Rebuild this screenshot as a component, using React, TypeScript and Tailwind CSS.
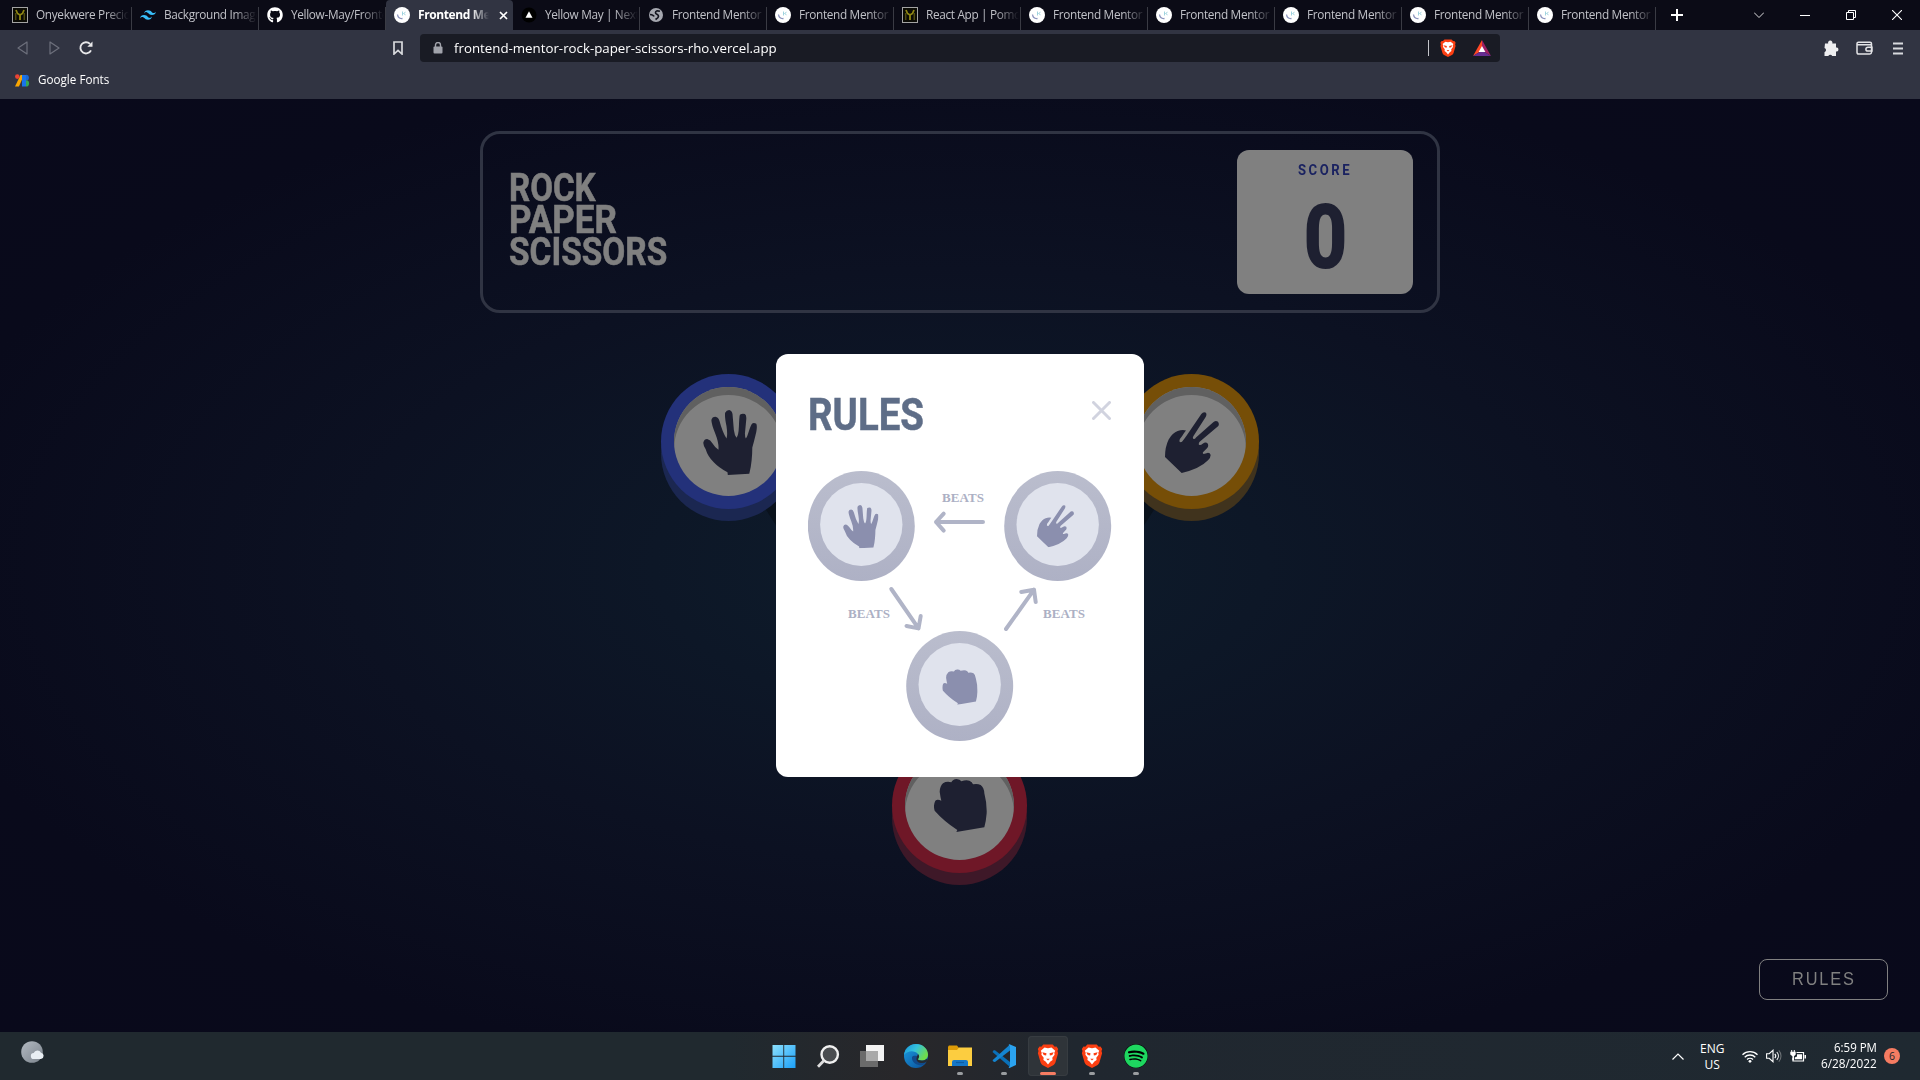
import { useLayoutEffect, useRef, useState } from "react";
import type { ReactNode } from "react";
import { FaGithub, FaSpotify } from "react-icons/fa";
import { SiTailwindcss } from "react-icons/si";

/* Squeezes a line of text horizontally to a fixed width. */
function Fit({ width, className = "", children }: { width: number; className?: string; children: ReactNode }) {
  const ref = useRef<HTMLSpanElement>(null);
  const [scale, setScale] = useState(1);
  useLayoutEffect(() => {
    if (ref.current) setScale(width / ref.current.offsetWidth);
  }, [width]);
  return (
    <span className={`block whitespace-nowrap ${className}`} style={{ width }}>
      <span ref={ref} className="inline-block origin-left" style={{ transform: `scaleX(${scale})` }}>
        {children}
      </span>
    </span>
  );
}

/* ---------- favicons ---------- */

const YIcon = () => (
  <svg width="16" height="16" viewBox="0 0 16 16">
    <rect x="0.5" y="0.5" width="15" height="15" fill="#0b0b05" stroke="#a3a3a3" />
    <path d="M4 3 5.500 6.500 8 8l2.500-1.500L12 3M8 8v5" fill="none" stroke="#8f8712" strokeWidth="1.800" />
    <path d="M3.700 6v7M12.300 6v7" stroke="#4d4a10" strokeWidth="1.500" />
  </svg>
);
const MentorIcon = () => (
  <svg width="16" height="16" viewBox="0 0 16 16">
    <circle cx="8" cy="8" r="8" fill="#fff" />
    <path d="M3.500 7.500c.4 2.800 2.600 4.300 5 4" fill="none" stroke="#8b93bd" strokeWidth="1.300" />
    <path d="M8.500 4.500v4M11.500 5.200 9.500 6.500l2 1.300" fill="none" stroke="#9fd3de" strokeWidth="1" />
  </svg>
);
const VercelIcon = () => (
  <svg width="16" height="16" viewBox="0 0 16 16">
    <circle cx="8" cy="8" r="7.500" fill="#000" />
    <path d="M8 4.300 11.500 10.700h-7z" fill="#fff" />
  </svg>
);
const GlobeIcon = () => (
  <svg width="16" height="16" viewBox="0 0 16 16">
    <circle cx="8" cy="8" r="7" fill="#a6a8b0" />
    <path d="M12 4.300C9 3.300 7.500 4 7.500 5.700c0 1.800 3 1.500 3 3.600 0 1.700-1.500 2.400-3 3.200M2 7.500c2 .2 3.700.5 4 2" fill="none" stroke="#13141e" strokeWidth="1.700" />
  </svg>
);

const tabs: { icon: ReactNode; title: string; active?: boolean }[] = [
  { icon: <YIcon />, title: "Onyekwere Precious" },
  { icon: <SiTailwindcss size={16} color="#38bdf8" />, title: "Background Image" },
  { icon: <FaGithub size={16} color="#fff" />, title: "Yellow-May/Frontend" },
  { icon: <MentorIcon />, title: "Frontend Mentor", active: true },
  { icon: <VercelIcon />, title: "Yellow May | Next.js" },
  { icon: <GlobeIcon />, title: "Frontend Mentor |" },
  { icon: <MentorIcon />, title: "Frontend Mentor |" },
  { icon: <YIcon />, title: "React App | Pomodoro" },
  { icon: <MentorIcon />, title: "Frontend Mentor |" },
  { icon: <MentorIcon />, title: "Frontend Mentor |" },
  { icon: <MentorIcon />, title: "Frontend Mentor |" },
  { icon: <MentorIcon />, title: "Frontend Mentor |" },
  { icon: <MentorIcon />, title: "Frontend Mentor |" },
];

function Tab({ icon, title, active }: { icon: ReactNode; title: string; active?: boolean }) {
  return (
    <div className={`flex h-[30px] w-[127px] shrink-0 items-center pl-2 first:w-[128px] ${active ? "rounded-t-[4px] bg-[#313442]" : ""}`}>
      <span className="w-4 shrink-0">{icon}</span>
      <span
        className={`ml-2 overflow-hidden whitespace-nowrap [mask-image:linear-gradient(to_right,#000_75%,transparent)] ${
          active ? "w-[71px] text-[12px] font-bold tracking-[-0.400px] text-white" : "w-[93px] text-[11.800px] tracking-[-0.330px] text-[#c0c1c7]"
        }`}
      >
        {title}
      </span>
      {active ? (
        <svg className="ml-[10px]" width="9" height="9" viewBox="0 0 9 9">
          <path d="m1 1 7 7M8 1 1 8" stroke="#fff" strokeWidth="1.700" />
        </svg>
      ) : (
        <span className="mt-[7px] ml-auto h-[23px] w-px bg-[#3a3b44]" />
      )}
    </div>
  );
}

const BraveIcon = ({ size }: { size: number }) => (
  <svg width={size} height={size} viewBox="0 0 24 24">
    <path d="M7.300.5h9.400l2 2.200 1.800-.2 1.700 2.600-.7 2 .6 2.200-2.700 9.200c-.4 1.300-1.200 2-2.200 2.700L12 24l-5.200-2.800c-1-.7-1.800-1.400-2.200-2.700L1.900 9.300l.6-2.200-.7-2 1.700-2.600 1.800.2z" fill="#fb3f12" />
    <path d="M8.500 3.500 12 4.200l3.500-.7 3.700 3.300-.9 2 .3 2-2.300 3 .3 2.200-2.200 1.500L12 20.500 9.600 17.500l-2.200-1.500.3-2.200-2.300-3 .3-2-.9-2z" fill="#fff" />
    <path d="m6.300 8.300 4.200.9-.4 2.300-2.400-.6zM17.700 8.300l-4.200.9.4 2.300 2.400-.6zM10.200 14.800h3.600L12 16.500z" fill="#fb3f12" />
  </svg>
);

function BrowserChrome() {
  return (
    <header className="h-[99px] bg-[#313442] font-['Open_Sans','Noto_Sans',sans-serif]">
      <div className="flex h-[30px] items-center bg-[#0b0b16] pl-1">
        {tabs.map((t, i) => (
          <Tab key={i} {...t} />
        ))}
        <svg className="ml-[15px]" width="12" height="12" viewBox="0 0 12 12">
          <path d="M6 0v12M0 6h12" stroke="#fff" strokeWidth="2" />
        </svg>
        <div className="ml-auto flex items-center gap-[36px] pr-[18px]">
          <svg width="10" height="6" viewBox="0 0 10 6"><path d="m0 .5 5 5 5-5" fill="none" stroke="#ddd" /></svg>
          <svg width="10" height="10" viewBox="0 0 10 10"><path d="M0 5.500h10" stroke="#fff" /></svg>
          <svg width="10" height="10" viewBox="0 0 10 10"><path d="M.5 2.500h7v7h-7zM2.500 2.500v-2h7v7h-2" fill="none" stroke="#fff" /></svg>
          <svg width="10" height="10" viewBox="0 0 10 10"><path d="m0 0 10 10M10 0 0 10" stroke="#fff" strokeWidth="1.100" /></svg>
        </div>
      </div>
      <div className="flex h-9 items-center pl-[17px]">
        <svg width="11" height="14" viewBox="0 0 11 14"><path d="M10 1v12L1 7z" fill="none" stroke="#6d707c" strokeWidth="1.200" strokeLinejoin="round" /></svg>
        <svg className="ml-[21px]" width="11" height="14" viewBox="0 0 11 14"><path d="M1 1v12l9-6z" fill="none" stroke="#6d707c" strokeWidth="1.200" strokeLinejoin="round" /></svg>
        <svg className="ml-[19px]" width="14" height="14" viewBox="0 0 14 14">
          <path d="M12 9.300A5.600 5.600 0 1 1 11 2.900" fill="none" stroke="#e8e8ea" strokeWidth="1.900" />
          <path d="M13.500.5v5.300H8.300z" fill="#e8e8ea" />
        </svg>
        <svg className="ml-[300px]" width="10" height="14" viewBox="0 0 10 14"><path d="M1 1h8v12L5 9.300 1 13z" fill="none" stroke="#d9dadd" strokeWidth="1.700" /></svg>
        <div className="ml-[17px] flex h-7 w-[1080px] items-center rounded bg-[#191b24] pl-[13px]">
          <svg width="10" height="12" viewBox="0 0 10 12">
            <rect x="0.500" y="4.500" width="9" height="7" rx="1" fill="#a1a3ab" />
            <path d="M2.500 5V3a2.500 2.500 0 0 1 5 0v2" fill="none" stroke="#a1a3ab" strokeWidth="1.400" />
          </svg>
          <Fit width={323} className="mt-px ml-[11px] text-[13px] text-white">frontend-mentor-rock-paper-scissors-rho.vercel.app</Fit>
          <span className="ml-auto h-4 w-px bg-[#c4c5ca]" />
          <span className="ml-[10px]"><BraveIcon size={18} /></span>
          <svg className="mr-[9px] ml-4" width="18" height="16" viewBox="0 0 18 16">
            <path d="M9 0 0 16l9-5.500z" fill="#ff4724" />
            <path d="M9 0l9 16-9-5.500z" fill="#9e1f63" />
            <path d="M0 16h18l-9-5.500z" fill="#662d91" />
            <path d="m9 6 3.400 6H5.600z" fill="#fff" />
          </svg>
        </div>
        <div className="ml-auto flex items-center gap-[17px] pr-[17px]">
          <svg width="16" height="16" viewBox="0 0 16 16">
            <path fill="#eeeef0" d="M2 3.500h3.200a2.200 2.200 0 1 1 4.100 0H13v4a2 2 0 1 1 0 3.900V16H9.200a2.100 2.100 0 0 0-3.900 0H1.500v-3.800a2.200 2.200 0 0 0 0-4.200z" />
          </svg>
          <svg width="17" height="14" viewBox="0 0 17 14">
            <path d="M15.500 4V2.800c0-1-.7-1.600-1.500-1.600H2.500C1.500 1.200 1 1.800 1 2.600v8.600c0 1.100.7 1.800 1.700 1.800h11.100c1 0 1.700-.7 1.700-1.700V4M1.500 3.800H15.500M16 6.300h-4.200a1.900 1.900 0 0 0 0 3.800H16z" fill="none" stroke="#e3e3e6" strokeWidth="1.500" />
          </svg>
          <svg className="ml-[3px]" width="10" height="13" viewBox="0 0 10 13"><path d="M0 1.500h10M0 6.500h10M0 11.500h10" stroke="#d8d9dd" strokeWidth="1.800" /></svg>
        </div>
      </div>
      <div className="flex h-7 items-center pl-[15px]">
        <svg width="15" height="13" viewBox="0 0 15 13">
          <path d="M5.500 1H9L4 12.500H0z" fill="#f9a602" />
          <circle cx="2.300" cy="2.600" r="2.300" fill="#ea4335" />
          <path d="M7 1h4v11.500H7z" fill="#1a73e8" />
          <path d="M11 .8a2.900 2.900 0 0 1 0 5.800z" fill="#1967d2" />
          <path d="M11 6.300a3.100 3.100 0 0 1 0 6.200z" fill="#34a853" />
        </svg>
        <Fit width={71} className="ml-2 text-[12px] text-white">Google Fonts</Fit>
      </div>
    </header>
  );
}

/* ---------- hands ---------- */

const hands = {
  paper: {
    box: "158 180 161 194",
    d: "M232 374 231 366Q205 352 190 336 172 318 166 297 158 285 159 277 162 266 172 267 180 269 186 279 195 293 204 299 206 280 195 252 183 222 183 210 185 200 195 200 204 201 207 212 216 246 228 265 232 255 228 228 222 200 224 188 228 180 236 180 244 181 246 192L250 240Q252 256 258 263 264 255 265 230 266 200 268 194 275 189 283 192 288 196 287 208L283 250Q283 262 286 265 290 260 294 246 300 226 304 221 309 217 317 221 320 228 317 245 310 275 305 292 305 310 303 330 301 352 296 370Z",
  },
  scissors: {
    box: "795 186 162 182",
    d: "M795 320Q795 290 806 268 818 248 833 243 846 238 858 241 852 248 846 258 838 266 838 273 841 278 846 275 853 266 860 256L904 192Q910 184 918 188 921 194 917 201L880 258Q877 264 880 266 884 268 888 262L938 218Q945 210 953 214 959 220 955 228L899 275Q895 280 897 284 902 286 908 281 917 274 923 280 927 287 921 294L909 306Q907 310 911 311 917 310 922 308 930 307 932 314 932 322 924 330 900 355 845 368Z",
  },
  rock: {
    box: "462 627 159 159",
    d: "M529 786 532 780Q490 752 464 722 459 706 466 692 472 686 484 692 481 680 479 665 480 648 489 640 500 633 514 637 518 628 530 627 540 628 544 634 558 629 568 632 577 636 579 643 592 640 602 645 612 652 613 670 621 700 620 730 618 755 613 772Z",
  },
};
type HandName = keyof typeof hands;

function Hand({ name, ...rest }: { name: HandName; x?: number; y?: number; width: number; height: number; fill: string; className?: string }) {
  return (
    <svg viewBox={hands[name].box} preserveAspectRatio="none" {...rest}>
      <path d={hands[name].d} />
    </svg>
  );
}

function Pick({ name, ring, className = "" }: { name: HandName; ring: string; className?: string }) {
  const size = { paper: [54, 65], scissors: [54, 61], rock: [53, 53] }[name];
  const shift = { paper: "mt-[1px] ml-[3px]", scissors: "mt-[1px] ml-[2px]", rock: "mt-[-1px] ml-[1px]" }[name];
  return (
    <button className={`flex size-[135px] items-center justify-center rounded-full ${ring} ${className}`}>
      <span className="flex size-[109px] items-center justify-center rounded-full bg-[#808080] shadow-[inset_0_8px_0_#606060]">
        <Hand name={name} width={size[0]} height={size[1]} fill="#1e2031" className={shift} />
      </span>
    </button>
  );
}

/* ---------- rules dialog ---------- */

function RuleDisc({ x, y }: { x: number; y: number }) {
  return (
    <g>
      <ellipse cx={x} cy={y} rx="53.500" ry="55" fill="url(#disc)" />
      <ellipse cx={x} cy={y - 1.500} rx="41.200" ry="41.500" fill="#e0e3ed" />
    </g>
  );
}

function RulesDiagram() {
  return (
    <svg className="mt-[34px]" width="304" height="270" viewBox="808 471 304 270">
      <defs>
        <linearGradient id="disc" x1="0" y1="0" x2="0" y2="1">
          <stop offset="0" stopColor="#babdcd" />
          <stop offset="1" stopColor="#aeb1c5" />
        </linearGradient>
      </defs>
      <RuleDisc x={861.300} y={526} />
      <RuleDisc x={1057.700} y={526} />
      <RuleDisc x={959.700} y={686} />
      <Hand name="paper" x={843} y={505} width={35.500} height={43.300} fill="#8b8fae" />
      <Hand name="scissors" x={1037} y={505} width={37} height={42.300} fill="#8b8fae" />
      <Hand name="rock" x={942.300} y={669.300} width={35.400} height={35.400} fill="#8b8fae" />
      <g fill="none" stroke="#b0b4c7" strokeWidth="4" strokeLinecap="round" strokeLinejoin="round">
        <path d="M983 522H936M943.700 513.700 936 522l7.700 8.600" />
        <path d="m891.300 589 27.200 39.400M906.500 626l12 2.400 2.200-12.400" />
        <path d="m1006 629 28-39.300M1021.300 592l12.700-2.300 1.700 12.300" />
      </g>
      <g className="font-['Liberation_Serif',serif] text-[13px] font-bold" fill="#acb0c4">
        <text x="942" y="502" textLength="42">BEATS</text>
        <text x="848" y="618" textLength="42">BEATS</text>
        <text x="1043" y="618" textLength="42">BEATS</text>
      </g>
    </svg>
  );
}

function RulesDialog() {
  return (
    <section className="absolute top-[255px] left-1/2 h-[423px] w-[368px] -translate-x-1/2 rounded-[12px] bg-white pt-[35px] pl-8">
      <div className="flex h-12 items-start">
        <Fit width={116} className="mt-[2px] text-[44px] leading-[48px] font-bold text-[#5e6d87] [-webkit-text-stroke:0.5px_#5e6d87]">RULES</Fit>
        <svg className="mt-[12px] ml-[168px]" width="19" height="19" viewBox="0 0 19 19">
          <path d="m1.500 1.500 16 16M17.500 1.500l-16 16" stroke="#d1d3df" strokeWidth="3" strokeLinecap="round" />
        </svg>
      </div>
      <RulesDiagram />
    </section>
  );
}

function Game() {
  return (
    <main className="relative flex h-[933px] flex-col items-center bg-[radial-gradient(ellipse_at_center,#0e1d2c_0%,#0c1122_45%,#090a1b_78%,#09091b_100%)] pt-8 font-['Roboto',sans-serif]">
      <div className="flex h-[182px] w-[960px] items-center justify-between rounded-[20px] border-3 border-[#303443] pr-6 pl-[26px]">
        <h1 className="mb-[4px] text-[39.500px] leading-8 font-bold text-[#808080] [-webkit-text-stroke:0.600px_#808080]">
          <Fit width={87}>ROCK</Fit>
          <Fit width={108}>PAPER</Fit>
          <Fit width={158}>SCISSORS</Fit>
        </h1>
        <div className="flex h-36 w-44 flex-col items-center rounded-[12px] bg-[#808080] pt-[10px]">
          <Fit width={54} className="text-[15.500px] leading-[20px] font-bold tracking-[3px] text-[#1a2260]">SCORE</Fit>
          <Fit width={43} className="mt-[13px] text-[87px] leading-[88px] font-bold text-[#1e2031] [-webkit-text-stroke:2px_#1e2031]">0</Fit>
        </div>
      </div>
      <svg className="absolute top-[343px] left-[728px]" width="464" height="365" viewBox="0 0 464 365">
        <path d="M8 8h448L232 357z" fill="none" stroke="#0a121c" strokeWidth="14" />
      </svg>
      <div className="relative mt-[61px] mr-px flex w-[598px] justify-between">
        <Pick name="paper" ring="bg-[#23317a] shadow-[0_12px_0_#1b2751]" />
        <Pick name="scissors" ring="bg-[#764e07] shadow-[0_12px_0_#40331d]" />
      </div>
      <Pick name="rock" ring="bg-[#6f1727] shadow-[0_12px_0_#3e1828]" className="relative mt-[229px] mr-px" />
      <button className="absolute right-8 bottom-8 flex h-[41px] w-[129px] items-center justify-center rounded-[8px] border border-[#808080] font-['Liberation_Sans',sans-serif] text-[17.600px] tracking-[2px] text-[#808080]">
        <Fit width={64}>RULES</Fit>
      </button>
      <RulesDialog />
    </main>
  );
}

/* ---------- taskbar ---------- */

function Slot({ children, mark = "none", active }: { children: ReactNode; mark?: "none" | "dot" | "bar"; active?: boolean }) {
  return (
    <div className="flex w-11 justify-center">
      <div className={`flex h-10 w-10 flex-col items-center rounded pt-2 ${active ? "bg-[#2f3439] ring-1 ring-[#373c41] ring-inset" : ""}`}>
        <span className="h-6">{children}</span>
        {mark === "dot" && <span className="mt-1 h-[3px] w-[6px] rounded-full bg-[#9a9da0]" />}
        {mark === "bar" && <span className="mt-1 h-[3px] w-4 rounded-full bg-[#f67c62]" />}
      </div>
    </div>
  );
}

function Taskbar() {
  return (
    <footer className="grid h-12 grid-cols-[1fr_auto_1fr] bg-[linear-gradient(90deg,#20292f_0%,#20292f_38%,#28272a_47%,#20272f_56%,#1f2931_100%)] pt-1 font-['Open_Sans','Noto_Sans',sans-serif] text-white">
      <svg className="mt-[4px] ml-[20px]" width="25" height="24" viewBox="0 0 25 24">
        <defs>
          <linearGradient id="moon" x1="0" y1="0" x2="1" y2="1"><stop stopColor="#b3bac2" /><stop offset="1" stopColor="#7b838c" /></linearGradient>
        </defs>
        <circle cx="12" cy="12" r="10.800" fill="url(#moon)" />
        <path d="M14 19a3 3 0 0 1-.3-6 4 4 0 0 1 7.300-.3 3.200 3.200 0 0 1 0 6.300z" fill="#e8eef3" />
      </svg>
      <div className="flex">
        <Slot>
          <svg width="24" height="24" viewBox="0 0 24 24">
            <defs><linearGradient id="win" x1="0" y1="0" x2="1" y2="1"><stop stopColor="#8ce0fd" /><stop offset="1" stopColor="#1ba0f8" /></linearGradient></defs>
            <path d="M.5 1h10.800v10.800H.5zM12.200 1h11.300v10.800H12.200zM.5 12.700h10.800V24H.5zM12.200 12.700h11.300V24H12.200z" fill="url(#win)" />
          </svg>
        </Slot>
        <Slot>
          <svg width="24" height="24" viewBox="0 0 24 24">
            <circle cx="13.700" cy="10.500" r="8.200" fill="#4a4d50" stroke="#f0f0f0" strokeWidth="2.400" />
            <path d="m8 16.500-6 6.300" stroke="#dedede" strokeWidth="2.800" />
          </svg>
        </Slot>
        <Slot>
          <svg width="24" height="24" viewBox="0 0 24 24">
            <path d="M6 1h18v16H6z" fill="#f3f3f3" />
            <path d="M0 7h18v16H0z" fill="#6b6b6b" />
            <path d="M6 7h12v10H6z" fill="#a9a9a9" />
          </svg>
        </Slot>
        <Slot>
          <svg width="24" height="24" viewBox="0 0 24 24">
            <defs>
              <linearGradient id="edgeTop" x1="0" y1="0" x2="1" y2="0.500"><stop stopColor="#1693dc" /><stop offset="0.500" stopColor="#35c1dc" /><stop offset="1" stopColor="#6fdd4a" /></linearGradient>
              <linearGradient id="edgeLow" x1="0" y1="0" x2="1" y2="1"><stop stopColor="#1b9de2" /><stop offset="1" stopColor="#0a4d96" /></linearGradient>
            </defs>
            <circle cx="12" cy="12" r="12" fill="url(#edgeLow)" />
            <path d="M0 11C1 4 6 0 12 0c7 0 12 5 12 10.500 0 4-3 6-6.500 6-3 0-4.200-1-3.500-2 1.200-1.300 1.200-3 0-4.500C11 6.500 4 6 0 11z" fill="url(#edgeTop)" />
            <path d="M8 13c-.5 5 4 9 11 8l4-4c-4 2.500-9 1.500-9-1.500.6-1.200.7-3-1-3.500-2-.6-4-.5-5 1z" fill="#114a8b" />
            <path d="M14 10c1.500 1.500 1.500 3 .2 4.500-.8 1 .5 2 3.300 2 2 0 3.700-.5 4.900-1.600L24 16l-1.500 2c-5 2.500-10 .5-10-3 0-1.500.5-3 1.500-5z" fill="#252b31" />
          </svg>
        </Slot>
        <Slot mark="dot">
          <svg width="24" height="24" viewBox="0 0 24 24">
            <path d="M0 2.500 1 1.500h8L11 4v4H0z" fill="#dd9b07" />
            <path d="M0 6h9l2-2.500h13V22H0z" fill="#fccd40" />
            <path d="M4 22v-4a2 2 0 0 1 2-2h12a2 2 0 0 1 2 2v4z" fill="#1577c7" />
            <path d="M8 18.500h8" stroke="#0d5ca3" strokeWidth="1.200" />
          </svg>
        </Slot>
        <Slot mark="dot">
          <svg width="24" height="24" viewBox="0 0 24 24">
            <path d="M1.600 6.300 3 6.200 18 18v5L.5 8z" fill="#0a70b8" />
            <path d="M.5 16.200 18 .5v6L3 17.900l-1.400-.2z" fill="#1485d1" />
            <path d="M17.500.3 24 3v18l-6.500 3-1-.7L18 22V2L16.500 1z" fill="#2ba3f0" />
          </svg>
        </Slot>
        <Slot mark="bar" active><BraveIcon size={24} /></Slot>
        <Slot mark="dot"><BraveIcon size={24} /></Slot>
        <Slot mark="dot">
          <span className="flex size-6 rounded-full bg-black"><FaSpotify size={24} color="#1ed760" /></span>
        </Slot>
      </div>
      <div className="mb-1 flex items-center justify-end pr-5 text-[12px] leading-4">
        <svg width="12" height="7" viewBox="0 0 12 7"><path d="m.5 6.500 5.500-5.500 5.500 5.500" fill="none" stroke="#fff" strokeWidth="1.200" /></svg>
        <div className="mt-px ml-4 flex flex-col items-center">
          <Fit width={24}>ENG</Fit>
          <Fit width={15}>US</Fit>
        </div>
        <svg className="ml-[18px]" width="16" height="13" viewBox="0 0 16 13">
          <g fill="none" stroke="#fff" strokeWidth="1.300">
            <path d="M.5 4.800a10.600 10.600 0 0 1 15 0M2.700 7.200a7.500 7.500 0 0 1 10.600 0M5 9.500a4.300 4.300 0 0 1 6 0" />
          </g>
          <circle cx="8" cy="11.300" r="1.400" fill="#fff" />
        </svg>
        <svg className="ml-2" width="16" height="14" viewBox="0 0 16 14">
          <g fill="none" stroke="#fff" strokeWidth="1.100">
            <path d="M.6 4.700h2.600L7 1.300v11.400L3.200 9.300H.6zM8.800 4.800a3.300 3.300 0 0 1 0 4.400M10.800 3a6 6 0 0 1 0 8" />
            <path d="M12.800 1.300a8.500 8.500 0 0 1 0 11.400" stroke="#6b7075" />
          </g>
        </svg>
        <svg className="ml-2" width="16" height="12" viewBox="0 0 16 12">
          <path d="M6.500 2.500h7v8.500H3V8" fill="none" stroke="#fff" strokeWidth="1.200" />
          <path d="M7 4.300h5v5H4.800V7.500L7 6.500zM14.500 5H16v3.500h-1.500zM.3 1.800h5.400v2.700L4 6.300v4H2.400v-4L.3 4.500zM1.200 0h1v2h-1zM3.800 0h1v2h-1z" fill="#fff" />
        </svg>
        <div className="ml-[15px] flex flex-col items-end">
          <Fit width={43}>6:59 PM</Fit>
          <Fit width={56}>6/28/2022</Fit>
        </div>
        <span className="ml-[7px] flex size-4 items-center justify-center rounded-full bg-[#f67c62] text-[10.500px] leading-none text-[#22262b]">6</span>
      </div>
    </footer>
  );
}

export default function App() {
  return (
    <div className="h-[1080px] w-[1920px] overflow-hidden bg-[#09091b]">
      <BrowserChrome />
      <Game />
      <Taskbar />
    </div>
  );
}
